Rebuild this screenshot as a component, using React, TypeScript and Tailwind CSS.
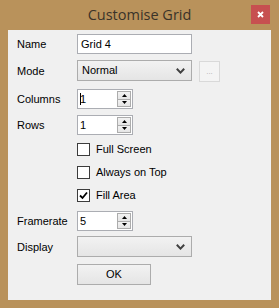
import React from "react";

const Chevron = () => (
  <svg width="9" height="6" viewBox="0 0 9 6">
    <path d="M0.8 0.8 L4.5 4.6 L8.2 0.8" stroke="#404040" strokeWidth="2" fill="none" />
  </svg>
);

const Combo = ({ text, mt }: { text: string; mt: string }) => (
  <div
    className={`${mt} ml-[69px] w-[115px] h-[21px] border border-[#acacac] bg-gradient-to-b from-[#f2f2f2] to-[#e5e5e5] flex items-center justify-between pl-[4px] pr-[6px]`}
  >
    <span className="text-[11px] text-black leading-none">{text}</span>
    <Chevron />
  </div>
);

const Spin = ({ value, caret }: { value: string; caret?: boolean }) => (
  <div className="ml-[69px] w-[56px] h-[20px] border border-[#abadb3] bg-white flex items-stretch">
    <div className="flex-1 flex items-center pl-[2px] text-[11px] leading-none text-black">
      {caret && <span className="w-px h-[12px] bg-black mr-[-1px]" />}
      <span>{value}</span>
    </div>
    <div className="w-[15px] flex flex-col py-[1px] pr-[1px] gap-0">
      <div className="flex-1 border border-[#acacac] bg-gradient-to-b from-[#f2f2f2] to-[#e5e5e5] flex items-center justify-center">
        <svg width="5" height="3" viewBox="0 0 5 3"><path d="M2.5 0 L5 3 L0 3 Z" fill="#000" /></svg>
      </div>
      <div className="flex-1 border border-t-0 border-[#acacac] bg-gradient-to-b from-[#f2f2f2] to-[#e5e5e5] flex items-center justify-center">
        <svg width="5" height="3" viewBox="0 0 5 3"><path d="M0 0 L5 0 L2.5 3 Z" fill="#000" /></svg>
      </div>
    </div>
  </div>
);

const Row = ({ label, children, mt }: { label: string; children: React.ReactNode; mt: string }) => (
  <div className={`${mt} relative`}>
    <span className="absolute left-[9px] top-1/2 -translate-y-1/2 text-[11px] leading-none text-black">{label}</span>
    {children}
  </div>
);

const Check = ({ label, checked, mt }: { label: string; checked?: boolean; mt: string }) => (
  <div className={`${mt} ml-[69px] flex items-center h-[13px]`}>
    <div className="w-[13px] h-[13px] border border-[#3c3c3c] bg-white flex items-center justify-center">
      {checked && (
        <svg width="9" height="9" viewBox="0 0 9 9">
          <path d="M1 4.5 L3.5 7 L8 1.5" stroke="#000" strokeWidth="1.8" fill="none" />
        </svg>
      )}
    </div>
    <span className="ml-[6px] text-[11px] leading-none text-black">{label}</span>
  </div>
);

export default function App() {
  return (
    <div
      className="w-[279px] h-[308px] bg-[#b9925b] flex flex-col"
      style={{ fontFamily: '"Liberation Sans", Arial, sans-serif' }}
    >
      <div className="h-[30px] relative flex items-center justify-center">
        <span
          className="text-[14.5px] text-[#3a3329] leading-none"
          style={{ fontFamily: '"Open Sans", "Noto Sans", sans-serif' }}
        >
          Customise Grid
        </span>
        <div className="absolute left-[251px] top-[5px] w-[19px] h-[19px] bg-[#c75050] flex items-center justify-center">
          <svg width="7" height="7" viewBox="0 0 7 7">
            <path d="M1 1 L6 6 M6 1 L1 6" stroke="#fff" strokeWidth="1.8" />
          </svg>
        </div>
      </div>
      <div className="mx-[8px] h-[270px] bg-[#f0f0f0] flex flex-col">
        <Row label="Name" mt="mt-[4px]">
          <div className="ml-[69px] w-[115px] h-[20px] border border-[#abadb3] bg-white flex items-center pl-[3px] text-[11px] leading-none text-black">
            Grid 4
          </div>
        </Row>
        <Row label="Mode" mt="mt-[6px]">
          <div className="flex items-start">
            <Combo text="Normal" mt="mt-0" />
            <div className="ml-[7px] mt-[1px] w-[21px] h-[21px] border border-[#d9d9d9] bg-[#f4f4f4] flex items-center justify-center text-[8px] text-[#b0b0b0] leading-none">
              ...
            </div>
          </div>
        </Row>
        <Row label="Columns" mt="mt-[7px]">
          <Spin value="1" caret />
        </Row>
        <Row label="Rows" mt="mt-[6px]">
          <Spin value="1" />
        </Row>
        <Check label="Full Screen" mt="mt-[8px]" />
        <Check label="Always on Top" mt="mt-[10px]" />
        <Check label="Fill Area" checked mt="mt-[10px]" />
        <Row label="Framerate" mt="mt-[9px]">
          <Spin value="5" />
        </Row>
        <Row label="Display" mt="mt-[5px]">
          <Combo text="" mt="mt-0" />
        </Row>
        <div className="mt-[7px] ml-[69px] w-[74px] h-[21px] border border-[#acacac] bg-gradient-to-b from-[#f2f2f2] to-[#e5e5e5] flex items-center justify-center text-[11px] leading-none text-black">
          OK
        </div>
      </div>
    </div>
  );
}
